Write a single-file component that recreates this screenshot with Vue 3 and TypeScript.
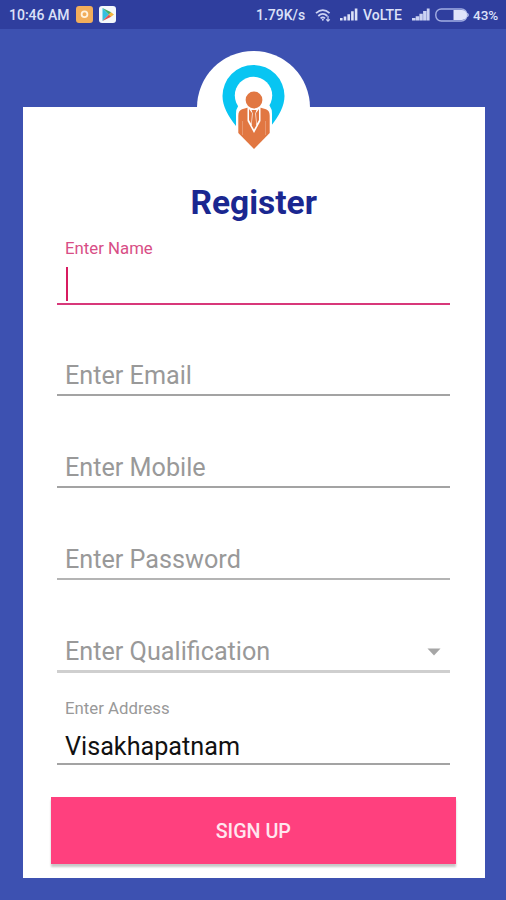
<script setup lang="ts">
interface Field {
  id: string
  label: string
  value?: string
  state: 'active' | 'empty' | 'filled'
  select?: boolean
}

const fields: Field[] = [
  { id: 'name', label: 'Enter Name', state: 'active' },
  { id: 'email', label: 'Enter Email', state: 'empty' },
  { id: 'mobile', label: 'Enter Mobile', state: 'empty' },
  { id: 'password', label: 'Enter Password', state: 'empty' },
  { id: 'qualification', label: 'Enter Qualification', state: 'empty', select: true },
  { id: 'address', label: 'Enter Address', value: 'Visakhapatnam', state: 'filled' },
]
</script>

<template>
  <div class="screen">
    <header class="status">
      <span class="time">10:46 AM</span>
      <svg class="app-icon" width="17" height="17" viewBox="0 0 17 17">
        <rect width="17" height="17" rx="3" fill="#f2ae5c" />
        <circle cx="8.5" cy="8.3" r="2.9" fill="#f2ae5c" stroke="#fff3df" stroke-width="1.8" />
      </svg>
      <svg class="play-icon" width="17" height="17" viewBox="0 0 17 17">
        <rect width="17" height="17" rx="3" fill="#f4f8fb" />
        <path d="M3.5 2v13l6.500-6.500z" fill="#35bfe0" />
        <path d="M3.5 2l6.500 6.500 2.200-2.200z" fill="#3fae6a" />
        <path d="M3.5 15l6.500-6.500 2.200 2.200z" fill="#e2504f" />
        <path d="M12 6.200l3 2.300-3 2.300-2.300-2.300z" fill="#f4b63c" />
      </svg>
      <span class="speed">1.79K/s</span>
      <svg class="wifi" width="17" height="14" viewBox="0 0 17 14" fill="none" stroke="#ccd3f3" stroke-width="1.8">
        <path d="M1 5.2Q7.8-1 14.6 5.2M3.3 8Q7.8 3.8 12.3 8M5.6 10.4Q7.8 8.4 10 10.4" />
        <circle cx="7.8" cy="11.7" r="1" fill="#ccd3f3" stroke="none" />
        <path d="M13 8v5M11.2 11.3l1.8 1.8 1.8-1.8" stroke-width="1.2" />
      </svg>
      <svg class="bars" width="18" height="13" viewBox="0 0 18 13" fill="#dce1f8">
        <path d="M0 10h2.6v2.5H0zM3.7 8.6h2.6v3.9H3.7zM7.4 6.2H10v6.3H7.4zM11.1 3.3h2.6v9.2h-2.6zM14.8.5h2.6v12h-2.6z" />
      </svg>
      <span class="volte">VoLTE</span>
      <svg class="bars-two" width="18" height="13" viewBox="0 0 18 13" fill="#cbd2f2">
        <path d="M0 10h3.4v2.5H0zM3.7 8.200h3.4v4.3H3.7zM7.4 5.8h3.4v6.7H7.4zM11.1 3.1h3.4v9.4h-3.4zM14.8.5h2.8v12h-2.8z" />
      </svg>
      <svg class="battery" width="35" height="14" viewBox="0 0 35 14">
        <rect x=".8" y="1" width="31" height="12" rx="5.5" fill="none" stroke="#a3aee3" stroke-width="1.4" />
        <path d="M18.5 2H27a5 5 0 0 1 0 10h-8.500z" fill="#dfe4fa" />
        <path d="M32.500 5q2 2 0 4z" fill="#a3aee3" stroke="#a3aee3" />
      </svg>
      <span class="percent">43%</span>
    </header>

    <main class="card">
      <div class="badge">
        <svg width="113" height="113" viewBox="0 0 113 113">
          <path d="M56.500 14a31 31 0 0 0-31 31c0 10 5.500 20 13.500 30h35c8-10 13.500-20 13.500-30a31 31 0 0 0-31-31z" fill="#08c5f2" />
          <circle cx="56.500" cy="44.500" r="18.700" fill="#fff" />
          <path d="M39 84V62.500Q39 54 47 50.500h20q8 3.500 8 12V84L57 101z" fill="#fff" />
          <path d="M41.300 82V65q0-5.500 3.700-6.800l6-1.700h12l6 1.700q3.700 1.300 3.700 6.800v17L57 98z" fill="#e17742" />
          <path d="M50.500 56v14L57 82l6.500-12V56z" fill="#fff" />
          <path d="M52 58v11l2.300 4 .7-11zM62 58v11l-2.300 4-.7-11z" fill="#e17742" />
          <path d="M54.500 59h5l-1.200 3.500 1 12L57 78.500l-2.300-4 1-12z" fill="#e17742" />
          <path d="M45.500 70v14M68.500 70v14" stroke="#fff" stroke-opacity=".3" stroke-width=".8" />
          <circle cx="57" cy="49" r="9.800" fill="#fff" />
          <circle cx="57" cy="49" r="8.400" fill="#e17742" />
        </svg>
      </div>
      <h1>Register</h1>
      <form class="fields">
        <div v-for="field in fields" :key="field.id" class="field" :class="[field.state, field.id]">
          <span class="label">{{ field.label }}</span>
          <span v-if="field.state === 'active'" class="caret"></span>
          <span v-if="field.value" class="value">{{ field.value }}</span>
          <svg v-if="field.select" class="arrow" width="14" height="8" viewBox="0 0 14 8">
            <path d="M.5.500h13L7 7.500z" fill="#a6a6a6" />
          </svg>
        </div>
      </form>
      <button type="button" class="submit">SIGN UP</button>
    </main>
  </div>
</template>

<style>
body {
  background: #3d51b1;
}
</style>

<style scoped>
.screen {
  box-sizing: border-box;
  width: 506px;
  height: 900px;
  overflow: hidden;
  background: #3d51b1;
  font-family: Roboto, "Liberation Sans", sans-serif;
}
.status {
  box-sizing: border-box;
  display: flex;
  align-items: center;
  height: 29px;
  padding: 0 0 0 9px;
  background: #2f3e9e;
  color: #dce1f8;
  font-size: 14px;
  font-weight: 500;
  line-height: 28px;
  white-space: nowrap;
}
.status svg {
  flex: none;
}
.status span {
  flex: none;
}
.time {
  width: 67px;
}
.play-icon {
  margin-left: 6px;
}
.speed {
  width: 50px;
  margin-left: 140px;
}
.wifi {
  margin-left: 9px;
}
.bars {
  margin-left: 8px;
}
.volte {
  width: 41px;
  margin-left: 5px;
}
.bars-two {
  margin-left: 8px;
}
.battery {
  margin-left: 5px;
}
.percent {
  margin-left: 3px;
  font-size: 13.500px;
}
.card {
  display: flex;
  flex-direction: column;
  width: 461.500px;
  height: 771px;
  margin: 78px 0 0 23px;
  background: #fff;
}
.badge {
  align-self: center;
  width: 113px;
  height: 113px;
  margin-top: -56px;
  border-radius: 50%;
  background: #fff;
}
.badge svg {
  display: block;
}
h1 {
  margin: 19px 0 0;
  height: 39px;
  color: #1a2790;
  font-size: 33.500px;
  font-weight: 700;
  line-height: 40px;
  text-align: center;
}
.fields {
  width: 393px;
  margin-left: 34px;
}
.field {
  box-sizing: border-box;
  display: flex;
  flex-wrap: wrap;
  align-content: flex-end;
  align-items: center;
  height: 92px;
  padding: 0 9px 2px 8px;
  border-bottom: 2px solid #a3a3a3;
  color: #999;
  font-size: 25.200px;
  line-height: 32px;
}
.field.name {
  height: 83px;
  border-bottom: 2px solid #d8387a;
}
.field.email {
  height: 91px;
}
.field.password {
  border-bottom-color: #b4b4b4;
}
.field.qualification {
  height: 93px;
  border-bottom: 3px solid #cfcfcf;
}
.field.address {
  padding-bottom: 0;
}
.active .label,
.filled .label {
  width: 100%;
  font-size: 16.800px;
  line-height: 20px;
}
.active .label {
  color: #d84e86;
}
.caret {
  width: 2px;
  height: 34px;
  margin: 9px 0 0 1px;
  background: #d81b60;
}
.value {
  margin-top: 13px;
  color: #111;
  font-size: 25.200px;
}
.arrow {
  margin-left: auto;
}
.submit {
  width: 404.500px;
  height: 67px;
  margin: 32px 0 0 28px;
  padding: 2px 0 0;
  border: 0;
  background: #ff407e;
  box-shadow: 0 3px 2px rgba(0, 0, 0, 0.22);
  color: #ffe6ef;
  font-family: inherit;
  font-size: 19.700px;
  font-weight: 500;
}
</style>
